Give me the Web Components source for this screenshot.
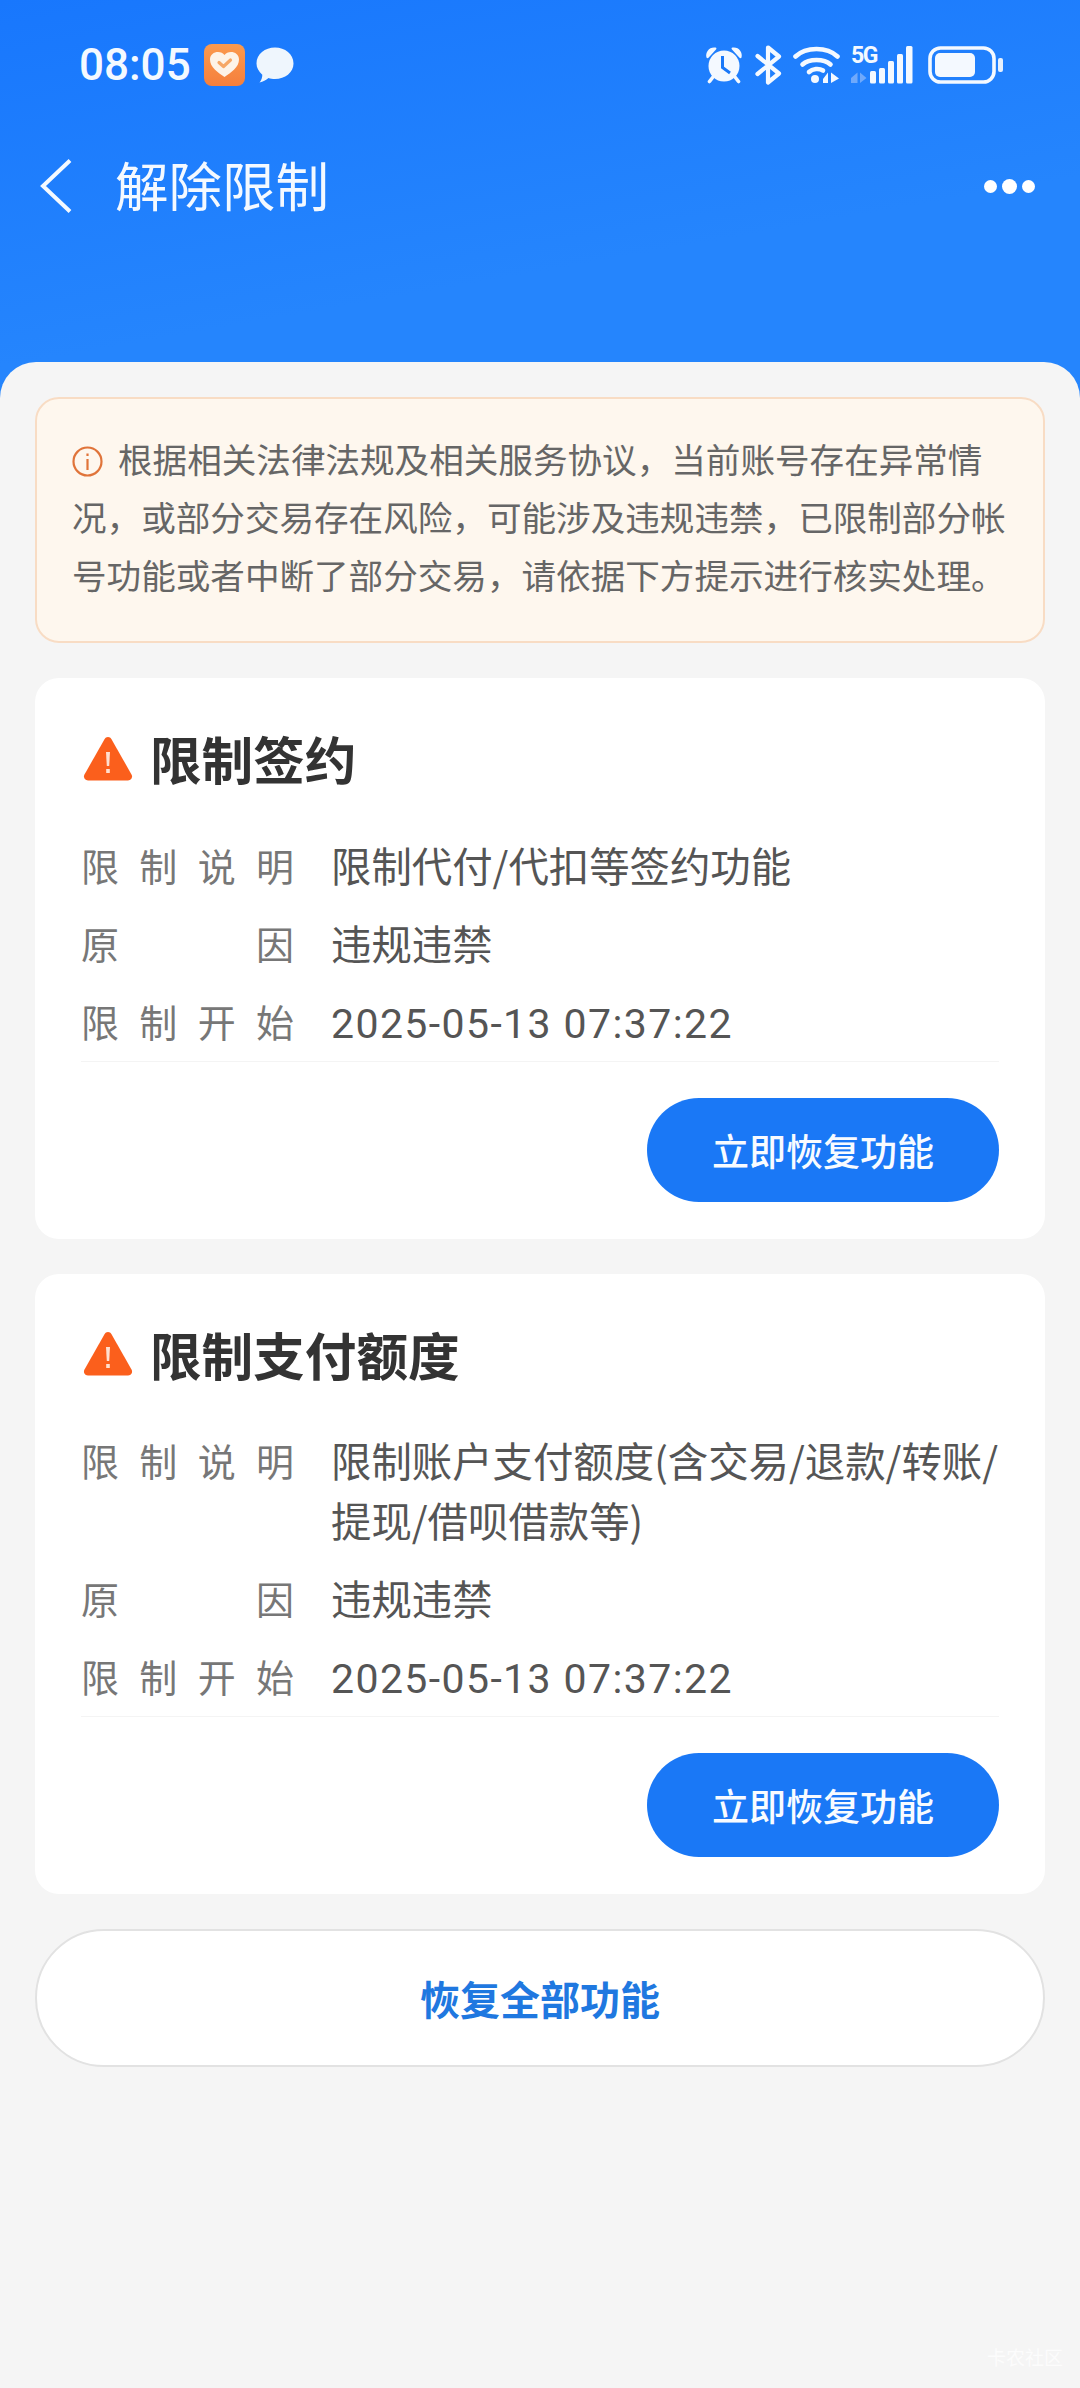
<!DOCTYPE html>
<html lang="zh-CN">
<head>
<meta charset="utf-8">
<title>解除限制</title>
<style>
	html, body {
		margin: 0;
		padding: 0;
		background: #f5f5f5;
	}
	body {
		width: 1080px;
		height: 2388px;
		overflow: hidden;
		font-family: "Noto Sans CJK SC", "Noto Sans", sans-serif;
	}
</style>
</head>
<body>
<restrict-page>
	<notice-box>根据相关法律法规及相关服务协议，当前账号存在异常情况，或部分交易存在风险，可能涉及违规违禁，已限制部分帐号功能或者中断了部分交易，请依据下方提示进行核实处理。</notice-box>
	<restrict-card heading="限制签约">
		<restrict-row label="限制说明">限制代付/代扣等签约功能</restrict-row>
		<restrict-row label="原因">违规违禁</restrict-row>
		<restrict-row label="限制开始"><date-text>2025-05-13 07:37:22</date-text></restrict-row>
	</restrict-card>
	<restrict-card heading="限制支付额度">
		<restrict-row label="限制说明">限制账户支付额度(含交易/退款/转账/提现/借呗借款等)</restrict-row>
		<restrict-row label="原因">违规违禁</restrict-row>
		<restrict-row label="限制开始"><date-text>2025-05-13 07:37:22</date-text></restrict-row>
	</restrict-card>
	<restore-all>恢复全部功能</restore-all>
</restrict-page>

<script>
const CJK = `"Noto Sans CJK SC", "Noto Sans", sans-serif`;

class StatusBar extends HTMLElement {
	constructor() {
		super();
		this.attachShadow({ mode: "open" });
		this.shadowRoot.innerHTML = `
			<style>
				:host {
					display: flex;
					align-items: center;
					justify-content: space-between;
					height: 42px;
					padding: 44px 77px 0 79px;
					color: #f4f9ff;
				}
				.left, .right {
					display: flex;
					align-items: center;
				}
				.time {
					font: 500 44px/42px Roboto, sans-serif;
					margin-right: 13px;
				}
				svg {
					display: block;
					flex: none;
				}
				.net {
					position: relative;
					display: block;
					margin-left: 10px;
				}
				.five {
					position: absolute;
					left: 1px;
					top: -2px;
					font: 700 23px/24px Roboto, sans-serif;
					letter-spacing: -1.500px;
				}
			</style>
			<div class="left">
				<span class="time">08:05</span>
				<svg width="41" height="42" viewBox="0 0 41 42">
					<defs>
						<linearGradient id="app" x1="0" y1="0" x2="0" y2="1">
							<stop offset="0" stop-color="#fb9a4e"/>
							<stop offset="1" stop-color="#f57f3c"/>
						</linearGradient>
					</defs>
					<rect width="41" height="42" rx="8" fill="url(#app)"/>
					<path d="M20.500 33 C14 28.500 6 23.500 6 15.500 C6 10.500 10 8 14 8 C16.800 8 19 9.300 20.500 11 C22 9.300 24.200 8 27 8 C31 8 35 10.500 35 15.500 C35 23.500 27 28.500 20.500 33Z" fill="#fdf3e8"/>
					<path d="M15 18.500 L19.500 22.500 L26.500 16" fill="none" stroke="#f6a766" stroke-width="3.200" stroke-linecap="round" stroke-linejoin="round"/>
				</svg>
				<svg style="margin-left:11px" width="38" height="36" viewBox="0 0 38 36">
					<path d="M19 0.500 C29 0.500 37.500 7 37.500 16.500 C37.500 25.500 29 32 19 32 C16.500 32 14.500 31.700 12.500 31 C10 33 7 35 3.500 35.500 C5.500 33 6.300 30.300 6.300 27.700 C2.800 24.700 0.500 20.800 0.500 16.500 C0.500 7 9 0.500 19 0.500Z" fill="#eff6fd"/>
				</svg>
			</div>
			<div class="right">
				<svg width="38" height="38" viewBox="0 0 38 38">
					<path d="M1.500 11.500 C0 6 4.500 0.500 10.500 1.500 C11.500 1.700 11.800 2.700 11 3.400 L3.500 11.800 C2.800 12.500 1.800 12.300 1.500 11.500Z M36.500 11.500 C38 6 33.500 0.500 27.500 1.500 C26.500 1.700 26.200 2.700 27 3.400 L34.500 11.800 C35.200 12.500 36.200 12.300 36.500 11.500Z" fill="#f4f9ff"/>
					<circle cx="19" cy="20" r="15.500" fill="#f4f9ff"/>
					<path d="M8 31 L4.500 35.500 M30 31 L33.500 35.500" stroke="#f4f9ff" stroke-width="3.600" stroke-linecap="round"/>
					<path d="M17.500 10 V21.500 L25 27" fill="none" stroke="#1a78f8" stroke-width="3"/>
				</svg>
				<svg style="margin-left:12px" width="27" height="40" viewBox="0 0 27 40">
					<path d="M2.500 11 L24 28.500 L13 37.500 V2.500 L24 11.500 L2.500 29" fill="none" stroke="#f4f9ff" stroke-width="4.200" stroke-linejoin="round" stroke-linecap="round"/>
				</svg>
				<svg style="margin-left:11px" width="47" height="38" viewBox="0 0 47 38">
					<path d="M2.500 10.500 C13 0.500 34 0.500 44.500 10.500" fill="none" stroke="#f4f9ff" stroke-width="4.600" stroke-linecap="round"/>
					<path d="M9.500 18.500 C16 12.500 31 12.500 37.500 18.500" fill="none" stroke="#f4f9ff" stroke-width="4.600" stroke-linecap="round"/>
					<path d="M16 26 C19.500 22.500 26 22 30 24.500" fill="none" stroke="#f4f9ff" stroke-width="4.600" stroke-linecap="round"/>
					<circle cx="22" cy="33" r="4" fill="#f4f9ff"/>
					<path d="M30 33 L35 26.500 V37 H30Z M38 26.500 L46 32.500 L38 37Z" fill="#f4f9ff"/>
				</svg>
				<span class="net">
					<span class="five">5G</span>
					<svg width="63" height="38" viewBox="0 0 63 38">
						<path d="M1 32 L7.500 26.500 V37 H1Z M10 26.500 L16.500 32 L10 37Z" fill="#6fa9fb"/>
						<rect x="20" y="25" width="6" height="12.500" rx="1.500" fill="#f4f9ff"/>
						<rect x="29" y="22" width="6" height="15.500" rx="1.500" fill="#f4f9ff"/>
						<rect x="38" y="15" width="6" height="22.500" rx="1.500" fill="#f4f9ff"/>
						<rect x="47" y="8" width="6" height="29.500" rx="1.500" fill="#f4f9ff"/>
						<rect x="56" y="0" width="6.500" height="37.500" rx="1.500" fill="#f4f9ff"/>
					</svg>
				</span>
				<svg style="margin-left:15px" width="75" height="38" viewBox="0 0 75 38">
					<rect x="2" y="2" width="64" height="34" rx="10.500" fill="none" stroke="#f4f9ff" stroke-width="3.600"/>
					<rect x="7" y="7" width="40" height="24" rx="5" fill="#f4f9ff"/>
					<rect x="70" y="12" width="5" height="14" rx="2" fill="#e6f0fd"/>
				</svg>
			</div>`;
	}
}
customElements.define("status-bar", StatusBar);

class NavBar extends HTMLElement {
	constructor() {
		super();
		this.attachShadow({ mode: "open" });
		this.shadowRoot.innerHTML = `
			<style>
				:host {
					display: flex;
					align-items: center;
					height: 60px;
					padding: 68px 42px 0 40px;
					color: #f4f9ff;
				}
				svg {
					margin-top: 4px;
				}
				.title {
					margin-left: 43px;
					font: 400 53.500px/60px ${CJK};
					flex: 1;
				}
				.dots {
					display: flex;
					align-items: center;
					gap: 5px;
					margin: 4px 3px 0 0;
				}
				.dots i {
					display: block;
					width: 13px;
					height: 13px;
					border-radius: 50%;
					background: #fff;
				}
				.dots i:nth-child(2) {
					width: 15px;
					height: 15px;
				}
			</style>
			<svg width="32" height="54" viewBox="0 0 32 54">
				<path d="M30 1.500 L3 27 L30 52.500" fill="none" stroke="#f4f9ff" stroke-width="4"/>
			</svg>
			<span class="title"><slot></slot></span>
			<div class="dots"><i></i><i></i><i></i></div>`;
	}
}
customElements.define("nav-bar", NavBar);

class RestrictPage extends HTMLElement {
	constructor() {
		super();
		this.attachShadow({ mode: "open" });
		this.shadowRoot.innerHTML = `
			<style>
				:host {
					display: block;
					position: relative;
					height: 2388px;
					background: linear-gradient(170deg, #1877fd 0, #2585fd 362px, #2585fd 440px);
				}
				.sheet {
					display: flex;
					flex-direction: column;
					gap: 35px;
					height: 2026px;
					box-sizing: border-box;
					margin-top: 148px;
					padding: 35px 35px 0;
					background: #f5f5f5;
					border-radius: 36px 36px 0 0;
				}
				.watermark {
					position: absolute;
					right: 17px;
					bottom: 20px;
					font: 400 19px/22px ${CJK};
					color: #fcfcfc;
				}
			</style>
			<status-bar></status-bar>
			<nav-bar>解除限制</nav-bar>
			<div class="sheet"><slot></slot></div>
			<span class="watermark">卡农社区</span>`;
	}
}
customElements.define("restrict-page", RestrictPage);

class NoticeBox extends HTMLElement {
	constructor() {
		super();
		this.attachShadow({ mode: "open" });
		this.shadowRoot.innerHTML = `
			<style>
				:host {
					display: block;
					box-sizing: border-box;
					height: 246px;
					padding: 30px 34px 0 35px;
					background: #fef7ee;
					border: 2.500px solid #f8dcc4;
					border-radius: 24px;
					font: 400 34.600px/58px ${CJK};
					color: #666;
				}
				svg {
					display: inline-block;
					vertical-align: -4px;
					margin-right: 15px;
				}
			</style>
			<svg width="31" height="31" viewBox="0 0 31 31">
				<circle cx="15.500" cy="15.500" r="14" fill="none" stroke="#e0743a" stroke-width="2.200"/>
				<path d="M15.500 7.500 V10 M15.500 13 V24" fill="none" stroke="#e0743a" stroke-width="2.200"/>
			</svg><slot></slot>`;
	}
}
customElements.define("notice-box", NoticeBox);

class RestrictCard extends HTMLElement {
	constructor() {
		super();
		this.attachShadow({ mode: "open" });
		this.shadowRoot.innerHTML = `
			<style>
				:host {
					display: block;
					background: #fff;
					border-radius: 24px;
					padding: 49px 46px 37px 46px;
				}
				.head {
					display: flex;
					align-items: center;
					gap: 17px;
					height: 62px;
					margin-bottom: 36.500px;
					font: 700 51.600px/62px ${CJK};
					color: #333;
				}
				.head svg {
					margin-left: 2px;
				}
				.rows {
					border-bottom: 1.500px solid #f4f4f4;
				}
				::slotted(restrict-row:last-child) {
					padding-bottom: 7px;
				}
				.foot {
					display: flex;
					justify-content: flex-end;
					margin-top: 36px;
				}
				.restore {
					display: flex;
					align-items: center;
					justify-content: center;
					width: 352px;
					height: 104px;
					border-radius: 52px;
					background: #1a78f6;
					color: #f8fbff;
					font: 500 37px/104px ${CJK};
				}
			</style>
			<div class="head">
				<svg width="50" height="45" viewBox="0 0 50 45">
					<path d="M25 1 C26.500 1 27.700 1.800 28.500 3.200 L48.500 38.500 C50 41.300 48.300 44.500 45 44.500 H5 C1.700 44.500 0 41.300 1.500 38.500 L21.500 3.200 C22.300 1.800 23.500 1 25 1Z" fill="#fb5f1c"/>
					<path d="M23 16 H27 L26.200 30 H23.800Z" fill="#ffe0d0"/>
					<rect x="23.200" y="33" width="3.600" height="4" fill="#ffe0d0"/>
				</svg>
				<span id="heading"></span>
			</div>
			<div class="rows"><slot></slot></div>
			<div class="foot"><div class="restore">立即恢复功能</div></div>`;
	}

	connectedCallback() {
		this.shadowRoot.getElementById("heading").textContent = this.getAttribute("heading");
	}
}
customElements.define("restrict-card", RestrictCard);

class RestrictRow extends HTMLElement {
	constructor() {
		super();
		this.attachShadow({ mode: "open" });
		this.shadowRoot.innerHTML = `
			<style>
				:host {
					display: flex;
					gap: 37px;
					padding: 9px 0;
					font: 400 38px/60px ${CJK};
				}
				.label {
					flex: none;
					width: 213px;
					color: #777;
					text-align: justify;
					text-align-last: justify;
				}
				.value {
					flex: 1;
					color: #555;
					font-size: 40.400px;
				}
			</style>
			<div class="label" id="label"></div>
			<div class="value"><slot></slot></div>`;
	}

	connectedCallback() {
		this.shadowRoot.getElementById("label").textContent = this.getAttribute("label").split("").join(" ");
	}
}
customElements.define("restrict-row", RestrictRow);

class DateText extends HTMLElement {
	constructor() {
		super();
		this.attachShadow({ mode: "open" });
		this.shadowRoot.innerHTML = `
			<style>
				:host {
					display: inline;
					font: 400 41px/60px Roboto, sans-serif;
					letter-spacing: 1.400px;
				}
			</style>
			<slot></slot>`;
	}
}
customElements.define("date-text", DateText);

class RestoreAll extends HTMLElement {
	constructor() {
		super();
		this.attachShadow({ mode: "open" });
		this.shadowRoot.innerHTML = `
			<style>
				:host {
					display: flex;
					align-items: center;
					justify-content: center;
					box-sizing: border-box;
					height: 138px;
					background: #fff;
					border: 2px solid #e2e2e2;
					border-radius: 69px;
					color: #1f78e0;
					font: 700 40px/60px ${CJK};
				}
			</style>
			<slot></slot>`;
	}
}
customElements.define("restore-all", RestoreAll);
</script>
</body>
</html>
